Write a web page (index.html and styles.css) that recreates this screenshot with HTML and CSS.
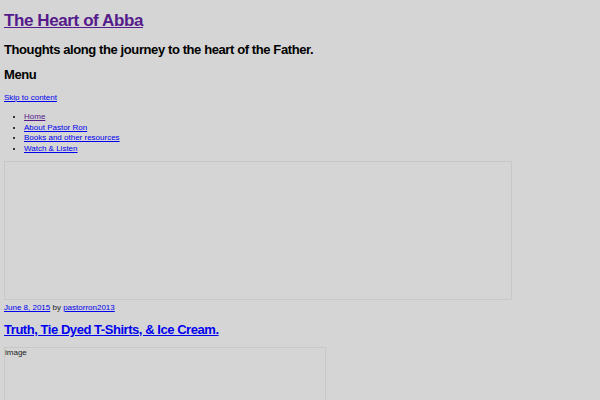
FILE: index.html
```html
<!DOCTYPE html>
<html>
<head>
<meta charset="utf-8">
<link rel="stylesheet" href="styles.css">
</head>
<body>
<div class="page">
  <header class="site-header">
    <h1 class="site-title"><a class="visited" href="#">The Heart of Abba</a></h1>
    <h2 class="site-desc">Thoughts along the journey to the heart of the Father.</h2>
    <h2 class="menu-title">Menu</h2>
    <a class="skip" href="#">Skip to content</a>
    <ul class="nav">
      <li><a class="visited" href="#">Home</a></li>
      <li><a href="#">About Pastor Ron</a></li>
      <li><a href="#">Books and other resources</a></li>
      <li><a href="#">Watch &amp; Listen</a></li>
    </ul>
  </header>
  <div class="header-image"></div>
  <article class="post">
    <div class="meta"><a href="#">June 8, 2015</a> by <a href="#">pastorron2013</a></div>
    <h2 class="post-title"><a href="#">Truth, Tie Dyed T-Shirts, &amp; Ice Cream.</a></h2>
    <div class="post-image">image</div>
  </article>
</div>
</body>
</html>
```
FILE: styles.css
```css
html, body {
  margin: 0;
  padding: 0;
  background: #d4d5d4;
}
body {
  font-family: "Liberation Sans", Arial, sans-serif;
  color: #000;
}
.page {
  padding: 0 4px;
}
a {
  color: #0000ee;
}
a.visited {
  color: #551a8b;
}
.site-title {
  margin: 0;
  padding-top: 11px;
  font-size: 17px;
  font-weight: bold;
  letter-spacing: -0.4px;
  line-height: 20px;
}
.site-desc {
  margin: 11px 0 0;
  font-size: 13px;
  font-weight: bold;
  letter-spacing: -0.4px;
  line-height: 16px;
}
.menu-title {
  margin: 9px 0 0;
  font-size: 13px;
  font-weight: bold;
  letter-spacing: -0.4px;
  line-height: 16px;
}
.skip {
  display: block;
  width: max-content;
  margin-top: 10px;
  font-size: 8px;
  line-height: 10px;
}
.nav {
  margin: 9px 0 0;
  padding-left: 20px;
  font-size: 8px;
  line-height: 10.5px;
}
.header-image {
  margin-top: 7px;
  width: 506px;
  height: 137px;
  border: 1px solid #c7c8c7;
}
.meta {
  margin-top: 3px;
  font-size: 8px;
  line-height: 10px;
  color: #222;
}
.post-title {
  margin: 9px 0 0;
  font-size: 13px;
  font-weight: bold;
  letter-spacing: -0.45px;
  line-height: 16px;
}
.post-image {
  margin-top: 9px;
  width: 320px;
  height: 80px;
  border: 1px solid #c7c8c7;
  font-size: 8px;
  line-height: 10px;
  color: #222;
}
```
